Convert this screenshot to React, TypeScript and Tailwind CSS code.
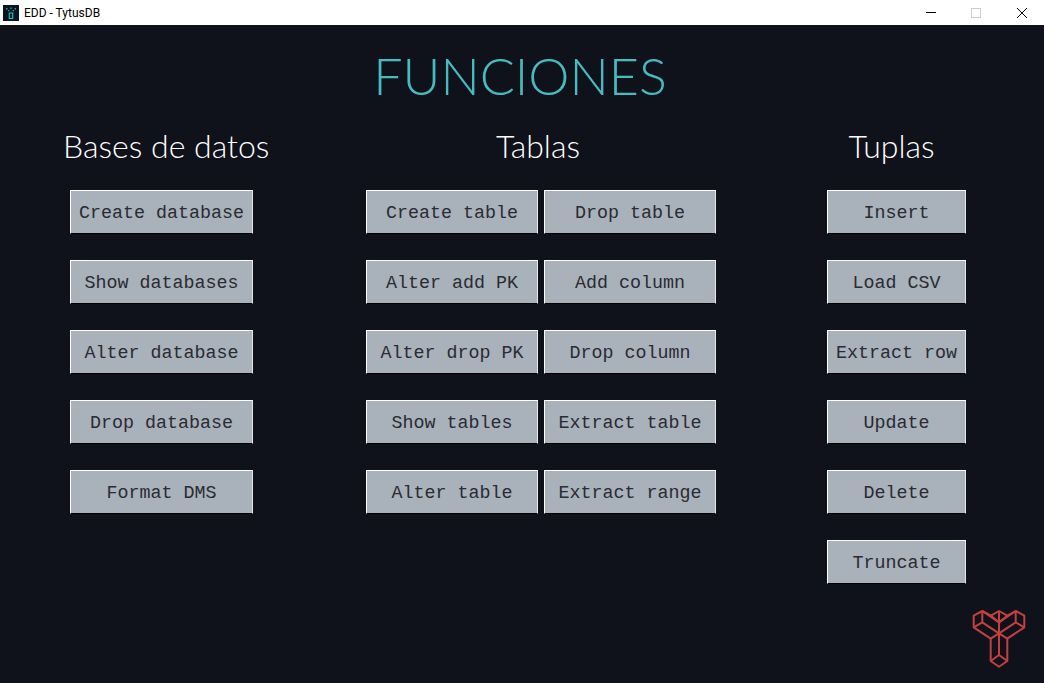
const heading = { fontFamily: "'Lato', 'Liberation Sans', sans-serif" };

function Btn({ label, w }: { label: string; w: string }) {
  return (
    <button
      className={`h-11 ${w} pt-1 bg-[#a9b1ba] border border-t-white border-l-white border-r-[#e4e7ea] border-b-black font-['Liberation_Mono',monospace] text-[18.33px] text-[#2a2b33] whitespace-nowrap`}
    >
      {label}
    </button>
  );
}

function Logo() {
  return (
    <svg viewBox="0 0 94 93" className="absolute right-0 bottom-0 w-[94px] h-[93px]" fill="none" stroke="#c44040" strokeWidth="2" strokeLinejoin="round">
      <path d="M23.7 25.7 32.3 21 41 25.7 49 21 57.3 25.7 65.7 21 74.3 25.7V37.3L57.3 48.7V71L49 76.7 40.7 71V48.7L23.7 37.3Z" />
      <path d="M23.7 37.3 32.3 32.3V21M32.3 21 49 32.3 65.7 21M32.3 32.3 49 43.3 65.7 32.3V21M65.7 32.3 74.3 37.3" />
      <path d="M41 25.7 49 32.3 57.3 25.7M49 21V32.3M49 32.3V65M40.7 48.7 49 43.3 57.3 48.7M40.7 71 49 65 57.3 71" />
    </svg>
  );
}

const bases = ["Create database", "Show databases", "Alter database", "Drop database", "Format DMS"];
const tablas = [
  ["Create table", "Drop table"],
  ["Alter add PK", "Add column"],
  ["Alter drop PK", "Drop column"],
  ["Show tables", "Extract table"],
  ["Alter table", "Extract range"],
];
const tuplas = ["Insert", "Load CSV", "Extract row", "Update", "Delete", "Truncate"];

export default function App() {
  return (
    <div className="w-[1044px] h-[683px] flex flex-col overflow-hidden bg-[#0f121a]">
      {/* title bar */}
      <div className="h-[25px] shrink-0 bg-white flex items-center pl-[3px]">
        <svg viewBox="0 0 16 16" className="w-4 h-4" fill="none">
          <rect width="16" height="16" fill="#0a161e" />
          <path d="M3 3h1.5v1.5H3zM11.5 3H13v1.5h-1.5zM7.3 2.5h1.4V4H7.3zM5 5h1.3v1.3H5zM9.7 5H11v1.3H9.7z" fill="#17a7ad" />
          <path d="M5.8 8h4.4M6.3 8v5.5h3.4V8" stroke="#17c3c9" strokeWidth="1.2" />
        </svg>
        <span className="ml-[5px] text-[12px] text-black font-['Roboto',sans-serif]">EDD - TytusDB</span>
        <div className="ml-auto flex items-center">
          <div className="w-[10px] h-px bg-black mr-[35px]" />
          <div className="w-[10px] h-[10px] border border-[#cccccc] mr-[36px]" />
          <svg viewBox="0 0 10 10" className="w-[10px] h-[10px] mr-[17px]" stroke="black" strokeWidth="1">
            <path d="M0 0 10 10M10 0 0 10" />
          </svg>
        </div>
      </div>

      <main className="relative flex-1 flex flex-col">
        <h1 style={heading} className="mt-[17px] pr-[4px] text-center text-[52px] leading-[66px] font-light text-[#45bcc0]">
          FUNCIONES
        </h1>
        <div className="flex mt-[20px] pl-[70px]">
          <section className="w-[296px] flex flex-col">
            <h2 style={heading} className="w-[204px] -ml-[7px] text-center whitespace-nowrap text-[32px] leading-[36px] font-light text-white">Bases de datos</h2>
            <div className="mt-[26px] flex flex-col gap-[26px] w-[183px]">
              {bases.map((b) => <Btn key={b} label={b} w="w-[183px]" />)}
            </div>
          </section>
          <section className="w-[461px] flex flex-col">
            <h2 style={heading} className="w-[344px] text-center text-[32px] leading-[36px] font-light text-white">Tablas</h2>
            <div className="mt-[26px] grid grid-cols-[172px_172px] gap-x-[6px] gap-y-[26px]">
              {tablas.flat().map((t) => <Btn key={t} label={t} w="w-[172px]" />)}
            </div>
          </section>
          <section className="w-[139px] flex flex-col">
            <h2 style={heading} className="w-[129px] text-center text-[32px] leading-[36px] font-light text-white">Tuplas</h2>
            <div className="mt-[26px] flex flex-col gap-[26px]">
              {tuplas.map((t) => <Btn key={t} label={t} w="w-[139px]" />)}
            </div>
          </section>
        </div>
        <Logo />
      </main>
    </div>
  );
}
